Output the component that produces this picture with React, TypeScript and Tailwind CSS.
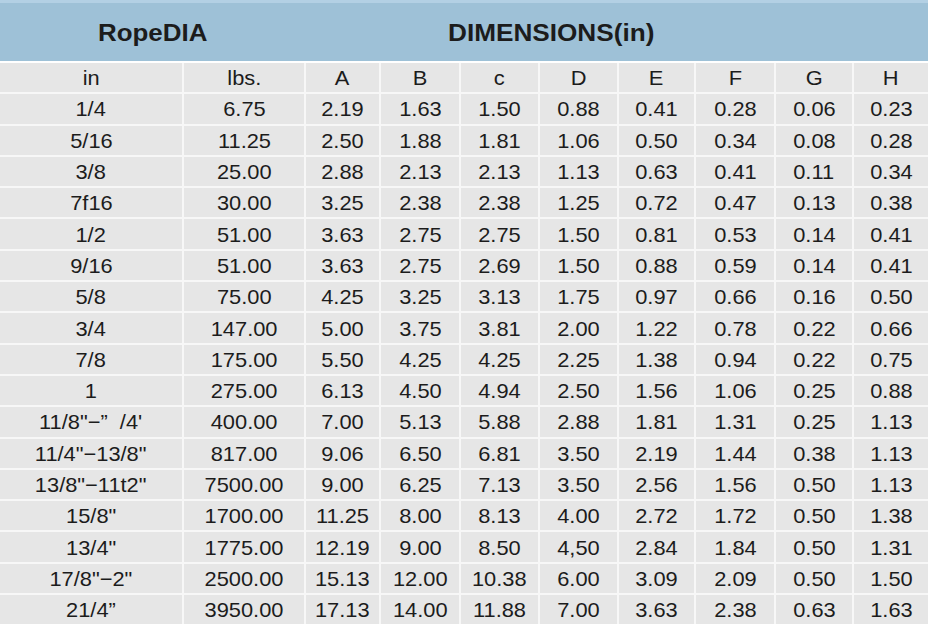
const columns = ['in', 'lbs.', 'A', 'B', 'c', 'D', 'E', 'F', 'G', 'H']

// rope diameter, weight, then dimensions A..H
const rows: string[][] = [
  ['1/4', '6.75', '2.19', '1.63', '1.50', '0.88', '0.41', '0.28', '0.06', '0.23'],
  ['5/16', '11.25', '2.50', '1.88', '1.81', '1.06', '0.50', '0.34', '0.08', '0.28'],
  ['3/8', '25.00', '2.88', '2.13', '2.13', '1.13', '0.63', '0.41', '0.11', '0.34'],
  ['7f16', '30.00', '3.25', '2.38', '2.38', '1.25', '0.72', '0.47', '0.13', '0.38'],
  ['1/2', '51.00', '3.63', '2.75', '2.75', '1.50', '0.81', '0.53', '0.14', '0.41'],
  ['9/16', '51.00', '3.63', '2.75', '2.69', '1.50', '0.88', '0.59', '0.14', '0.41'],
  ['5/8', '75.00', '4.25', '3.25', '3.13', '1.75', '0.97', '0.66', '0.16', '0.50'],
  ['3/4', '147.00', '5.00', '3.75', '3.81', '2.00', '1.22', '0.78', '0.22', '0.66'],
  ['7/8', '175.00', '5.50', '4.25', '4.25', '2.25', '1.38', '0.94', '0.22', '0.75'],
  ['1', '275.00', '6.13', '4.50', '4.94', '2.50', '1.56', '1.06', '0.25', '0.88'],
  ['11/8"\u2212\u201D  /4\'', '400.00', '7.00', '5.13', '5.88', '2.88', '1.81', '1.31', '0.25', '1.13'],
  ['11/4"\u221213/8"', '817.00', '9.06', '6.50', '6.81', '3.50', '2.19', '1.44', '0.38', '1.13'],
  ['13/8"\u221211t2"', '7500.00', '9.00', '6.25', '7.13', '3.50', '2.56', '1.56', '0.50', '1.13'],
  ['15/8"', '1700.00', '11.25', '8.00', '8.13', '4.00', '2.72', '1.72', '0.50', '1.38'],
  ['13/4"', '1775.00', '12.19', '9.00', '8.50', '4,50', '2.84', '1.84', '0.50', '1.31'],
  ['17/8"\u22122"', '2500.00', '15.13', '12.00', '10.38', '6.00', '3.09', '2.09', '0.50', '1.50'],
  ['21/4\u201D', '3950.00', '17.13', '14.00', '11.88', '7.00', '3.63', '2.38', '0.63', '1.63'],
]

export default function App() {
  const all = [columns, ...rows]

  return (
    <div className="w-[928px] h-[628px] bg-white overflow-hidden text-[#1c1c1c] font-['Liberation_Sans',Arial,sans-serif]">
      {/* header band */}
      <div className="h-[61px] bg-[#9ec1d7] border-t-[3px] border-[#b3d0e4] flex items-center font-bold text-[24px]">
        <div className="w-[305px] flex justify-center pt-[2px]">
          <span className="inline-block scale-x-[1.08]">RopeDIA</span>
        </div>
        <div className="pl-[143px] pt-[2px]">
          <span className="inline-block origin-left scale-x-[1.09]">DIMENSIONS(in)</span>
        </div>
      </div>

      <div className="mt-[2px] grid grid-cols-[182px_120px_73px_78px_77px_77px_75px_78px_76px_74px] auto-rows-[29.3px] gap-[2px] bg-[#f7f7f7]">
        {all.map((row, i) =>
          row.map((cell, j) => (
            <div
              key={`${i}-${j}`}
              className="bg-[#e6e6e6] flex items-center justify-center text-[21px] leading-none whitespace-pre"
            >
              <span className="inline-block scale-x-[1.04]">{cell}</span>
            </div>
          ))
        )}
      </div>
    </div>
  )
}
